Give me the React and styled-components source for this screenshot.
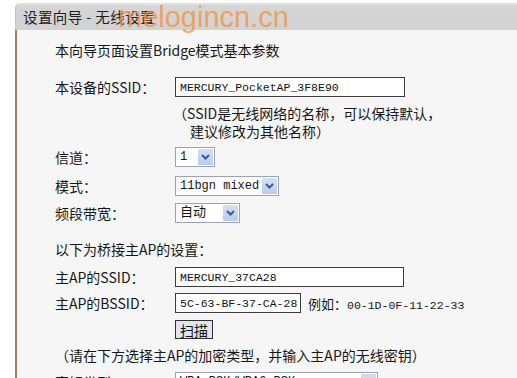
import styled, { createGlobalStyle } from 'styled-components'

const CJK = `"Noto Sans CJK SC", "Liberation Sans", sans-serif`
const MONO = `"Liberation Mono", "Noto Sans CJK SC", monospace`

const GlobalStyle = createGlobalStyle`
  html, body {
    margin: 0;
    padding: 0;
    background: #ffffff;
    overflow: hidden;
  }

  body {
    font-family: ${CJK};
    font-size: 14px;
    color: #161616;
  }
`

const Page = styled.div`
  width: 517px;
  height: 378px;
  padding: 3px 0 0 15px;
  box-sizing: border-box;
  overflow: hidden;
`

const Panel = styled.div`
  display: flex;
  flex-direction: column;
`

const TitleBar = styled.div`
  position: relative;
  display: flex;
  align-items: center;
  height: 27px;
  padding-left: 7px;
  background: linear-gradient(#e6e6e6 0, #d5d5d5 3px, #d2d2d2 100%);
  border-top-left-radius: 5px;
  border-left: 1px solid #c4c4c4;
  font-size: 14.5px;
  letter-spacing: 0.4px;
  color: #1e1e1e;
  white-space: pre;
`

const Watermark = styled.span`
  position: absolute;
  left: 102px;
  top: -1px;
  font-family: 'Liberation Sans', Arial, sans-serif;
  font-size: 29px;
  line-height: 30px;
  letter-spacing: 0;
  color: rgba(242, 148, 66, 0.78);
  pointer-events: none;
`

const Content = styled.div`
  display: flex;
  flex-direction: column;
  padding: 10px 0 20px 38px;
  background: #f6f6f6;
  border-left: 2px solid #a47a70;
  height: 400px;
`

const Line = styled.div`
  margin-top: ${(p) => p.$top || 0}px;
  height: 20px;
  line-height: 20px;
  white-space: nowrap;
`

const Row = styled.div`
  display: flex;
  align-items: center;
  margin-top: ${(p) => p.$top || 0}px;
  height: ${(p) => p.$h || 20}px;
  white-space: nowrap;
`

const Label = styled.span`
  flex-shrink: 0;
  width: 120px;
  line-height: 20px;
`

const TextInput = styled.div`
  display: flex;
  align-items: center;
  box-sizing: border-box;
  width: ${(p) => p.$w}px;
  height: 20px;
  padding-left: 4px;
  background: #ffffff;
  border: 1px solid #3d3d3d;
  font-family: ${MONO};
  font-size: 11.5px;
  color: #111111;
`

const Hint = styled.div`
  margin-top: 7px;
  margin-left: 118px;
  line-height: 18px;
  white-space: nowrap;

  .second {
    padding-left: 17px;
  }
`

const SelectBox = styled.div`
  display: flex;
  align-items: center;
  justify-content: space-between;
  box-sizing: border-box;
  width: ${(p) => p.$w}px;
  height: 20px;
  padding: 1px 1px 1px 4px;
  background: #ffffff;
  border: 1px solid #9aa4b5;
  font-family: ${MONO};
  font-size: 12px;
  color: #151515;
`

const SelectValue = styled.span`
  font-size: ${(p) => (p.$cjk ? '13px' : '12px')};
  line-height: 16px;
`

const Arrow = styled.span`
  display: flex;
  align-items: center;
  justify-content: center;
  width: 15px;
  height: 16px;
  background: ${(p) => (p.$muted ? '#d3dbe8' : 'linear-gradient(#d4e0f7, #b9cbef)')};
  border-radius: 1px;
`

const Example = styled.span`
  margin-left: 7px;
  font-size: 13px;

  .mono {
    font-family: ${MONO};
    font-size: 11.5px;
  }
`

const ScanButton = styled.button`
  box-sizing: border-box;
  width: 38px;
  height: 19px;
  padding: 0;
  margin-left: 120px;
  background: #dfe6f1;
  border: 1px solid #2f2f2f;
  font-family: ${CJK};
  font-size: 14px;
  line-height: 16px;
  color: #111111;
`

function Chevron() {
  return (
    <svg width="9" height="6" viewBox="0 0 9 6">
      <polyline
        points="1,1 4.5,4.5 8,1"
        fill="none"
        stroke="#3c5a96"
        strokeWidth="2"
      />
    </svg>
  )
}

function Select({ width, value, cjk, muted }) {
  return (
    <SelectBox $w={width}>
      <SelectValue $cjk={cjk}>{value}</SelectValue>
      <Arrow $muted={muted}>{muted ? null : <Chevron />}</Arrow>
    </SelectBox>
  )
}

export default function App() {
  return (
    <>
      <GlobalStyle />
      <Page>
        <Panel>
          <TitleBar>
            设置向导 - 无线设置
            <Watermark>melogincn.cn</Watermark>
          </TitleBar>
          <Content>
            <Line>本向导页面设置Bridge模式基本参数</Line>

            <Row $top={17}>
              <Label>本设备的SSID：</Label>
              <TextInput $w={230}>MERCURY_PocketAP_3F8E90</TextInput>
            </Row>
            <Hint>
              <div>（SSID是无线网络的名称，可以保持默认，</div>
              <div className="second">建议修改为其他名称）</div>
            </Hint>

            <Row $top={7}>
              <Label>信道：</Label>
              <Select width={40} value="1" />
            </Row>
            <Row $top={9}>
              <Label>模式：</Label>
              <Select width={104} value="11bgn mixed" />
            </Row>
            <Row $top={7}>
              <Label>频段带宽：</Label>
              <Select width={65} value="自动" cjk />
            </Row>

            <Line $top={16}>以下为桥接主AP的设置：</Line>

            <Row $top={8}>
              <Label>主AP的SSID：</Label>
              <TextInput $w={229}>MERCURY_37CA28</TextInput>
            </Row>
            <Row $top={6}>
              <Label>主AP的BSSID：</Label>
              <TextInput $w={126}>5C-63-BF-37-CA-28</TextInput>
              <Example>
                例如：<span className="mono">00-1D-0F-11-22-33</span>
              </Example>
            </Row>
            <Row $top={7} $h={19}>
              <ScanButton type="button">扫描</ScanButton>
            </Row>

            <Line $top={6}>（请在下方选择主AP的加密类型，并输入主AP的无线密钥）</Line>

            <Row $top={7}>
              <Label>密钥类型：</Label>
              <Select width={203} value="WPA-PSK/WPA2-PSK" muted />
            </Row>
          </Content>
        </Panel>
      </Page>
    </>
  )
}
